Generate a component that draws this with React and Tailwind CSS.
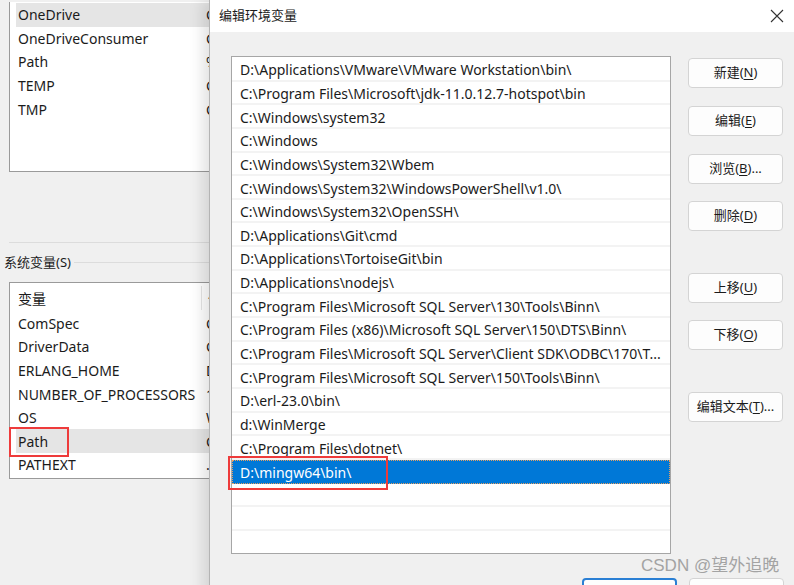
import React from "react";

const F = "font-['Noto_Sans','Noto_Sans_CJK_SC',sans-serif]";

const userVars = [
  ["OneDrive", "C:\\Users", true],
  ["OneDriveConsumer", "C:\\Users", false],
  ["Path", "%USER", false],
  ["TEMP", "C:\\Users", false],
  ["TMP", "C:\\Users", false],
];

const sysVars = [
  ["ComSpec", "C:\\Win"],
  ["DriverData", "C:\\Win"],
  ["ERLANG_HOME", "D:\\erl"],
  ["NUMBER_OF_PROCESSORS", "12"],
  ["OS", "Windows"],
  ["Path", "C:\\Win"],
  ["PATHEXT", ".COM"],
];

const paths = [
  "D:\\Applications\\VMware\\VMware Workstation\\bin\\",
  "C:\\Program Files\\Microsoft\\jdk-11.0.12.7-hotspot\\bin",
  "C:\\Windows\\system32",
  "C:\\Windows",
  "C:\\Windows\\System32\\Wbem",
  "C:\\Windows\\System32\\WindowsPowerShell\\v1.0\\",
  "C:\\Windows\\System32\\OpenSSH\\",
  "D:\\Applications\\Git\\cmd",
  "D:\\Applications\\TortoiseGit\\bin",
  "D:\\Applications\\nodejs\\",
  "C:\\Program Files\\Microsoft SQL Server\\130\\Tools\\Binn\\",
  "C:\\Program Files (x86)\\Microsoft SQL Server\\150\\DTS\\Binn\\",
  "C:\\Program Files\\Microsoft SQL Server\\Client SDK\\ODBC\\170\\T...",
  "C:\\Program Files\\Microsoft SQL Server\\150\\Tools\\Binn\\",
  "D:\\erl-23.0\\bin\\",
  "d:\\WinMerge",
  "C:\\Program Files\\dotnet\\",
];

function Btn({ children, className = "" }) {
  return (
    <div
      className={`h-[30px] w-[95px] rounded-[4px] border border-[#d4d4d4] bg-[#fdfdfd] flex items-center justify-center text-[13px] text-[#1b1b1b] ${className}`}
    >
      {children}
    </div>
  );
}

function U({ children }) {
  return <span className="underline underline-offset-2">{children}</span>;
}

export default function App() {
  return (
    <div className={`relative w-[794px] h-[585px] overflow-hidden bg-[#f0f0f0] ${F}`}>
      {/* background window */}
      <div className="flex flex-col text-[14px] text-[#1b1b1b]">
        <div className="ml-[9px] mt-[2px] w-[200px] h-[170px] overflow-hidden bg-white border border-[#9a9a9a] border-t-0 border-r-0 pt-[1px]">
          {userVars.map(([n, v, sel]) => (
            <div key={n} className="flex h-[23.6px] items-center">
              <div className={`ml-[6px] flex h-full flex-1 items-center whitespace-nowrap ${sel ? "bg-[#e5e5e5]" : ""}`}>
                <span className="w-[190px] shrink-0 pl-[2px]">{n}</span>
                <span>{v}</span>
              </div>
            </div>
          ))}
        </div>
        <div className="mt-[70px] ml-[9px] w-[200px] border-t border-[#dcdcdc]" />
        <div className="mt-[10px] flex items-center">
          <span className="ml-[4px] text-[13px]">系统变量(S)</span>
          <div className="ml-[3px] h-px flex-1 bg-[#dcdcdc]" />
        </div>
        <div className="ml-[9px] mt-[9px] w-[200px] h-[197px] overflow-hidden bg-white border border-[#9a9a9a] border-r-0">
          <div className="flex h-[29px] items-center pt-[2px] whitespace-nowrap">
            <span className="ml-[8px] w-[183px] shrink-0">变量</span>
            <div className="h-[24px] w-px shrink-0 bg-[#e5e5e5]" />
            <span className="ml-[6px]">值</span>
          </div>
          {sysVars.map(([n, v]) => (
            <div key={n} className="flex h-[23.6px] items-center">
              <div className={`ml-[6px] flex h-full flex-1 items-center whitespace-nowrap ${n === "Path" ? "bg-[#e5e5e5]" : ""}`}>
                <span className="w-[190px] shrink-0 pl-[2px]">{n}</span>
                <span>{v}</span>
              </div>
            </div>
          ))}
        </div>
      </div>

      {/* red box on Path (background) */}
      <div className="absolute left-[9px] top-[427px] h-[30px] w-[60px] border-2 border-[#ee3b3b]" />

      {/* dialog */}
      <div className="absolute left-[209px] top-0 w-[590px] h-[600px] bg-[#f0f0f0] border-l border-[#b4b4b4] shadow-[-6px_0_14px_rgba(0,0,0,0.12)]">
        <div className="flex h-[32px] items-center justify-between bg-white">
          <span className="ml-[9px] text-[13px] text-[#1b1b1b]">编辑环境变量</span>
          <svg width="14" height="14" viewBox="0 0 14 14" className="mr-[15px]">
            <path d="M1 1L13 13M13 1L1 13" stroke="#333" strokeWidth="1.1" />
          </svg>
        </div>
        <div className="flex pl-[21px] pt-[24px]">
          <div className="relative h-[498px] w-[440px] bg-white border border-[#a6a6a6] text-[14px] text-[#1b1b1b]">
            <div className="pt-[1px]">
              {paths.map((p) => (
                <div key={p} className="flex h-[23.65px] items-center border-b-2 border-[#f3f3f3] pl-[8px] pt-[2px] whitespace-nowrap">
                  {p}
                </div>
              ))}
              <div className="flex h-[23.65px] items-center bg-[#0078d7] pl-[8px] pt-[1px] text-white outline outline-1 outline-dotted outline-offset-[-1px] outline-[#e8a060]">
                D:\mingw64\bin\
              </div>
              <div className="h-[23.65px] border-b-2 border-[#f3f3f3]" />
              <div className="h-[23.65px] border-b-2 border-[#f3f3f3]" />
              <div className="h-[23.65px]" />
            </div>
          </div>
          <div className="ml-[17px] flex flex-col pt-[2px]">
            <Btn>新建(<U>N</U>)</Btn>
            <Btn className="mt-[18px]">编辑(<U>E</U>)</Btn>
            <Btn className="mt-[18px]">浏览(<U>B</U>)...</Btn>
            <Btn className="mt-[17px]">删除(<U>D</U>)</Btn>
            <Btn className="mt-[42px]">上移(<U>U</U>)</Btn>
            <Btn className="mt-[17px]">下移(<U>O</U>)</Btn>
            <Btn className="mt-[42px]">编辑文本(<U>T</U>)...</Btn>
          </div>
        </div>
        <div className="flex pl-[372px] pt-[24px]">
          <div className="h-[30px] w-[95px] rounded-[4px] border-2 border-[#2a7fd4] bg-[#fdfdfd]" />
          <div className="ml-[12px] h-[30px] w-[95px] rounded-[4px] border border-[#d4d4d4] bg-[#fdfdfd]" />
        </div>
      </div>

      {/* red box on mingw row */}
      <div className="absolute left-[228px] top-[456px] h-[34px] w-[160px] border-2 border-[#ee3b3b]" />

      {/* watermark */}
      <div className="absolute left-[641px] top-[555px] text-[17px] leading-[22px] text-[#a3a3a3] font-['Liberation_Sans','Noto_Sans_CJK_SC',sans-serif]">
        CSDN @望外追晚
      </div>
    </div>
  );
}
